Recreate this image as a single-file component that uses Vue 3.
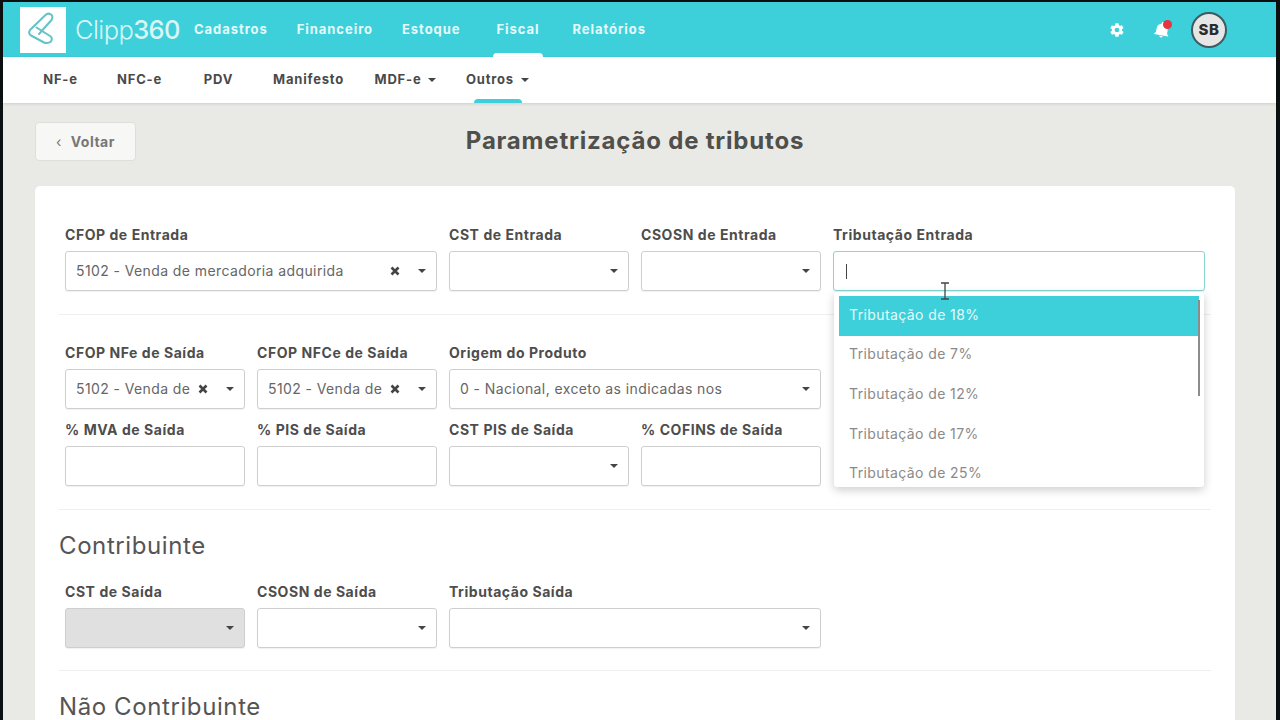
<template>
  <div class="page">
    <header class="topbar">
      <div class="logo-box">
        <svg viewBox="0 0 46 46" width="46" height="46">
          <path class="clip" d="M19 27 L31.500 13 Q33.500 9.500 31 7.500 Q28 5.500 25.500 8 L10 23 Q8 26.500 11 28.500 L24 35.500 Q28 37 31 34.500 Q33 31 30 29 L16.500 20.500" />
        </svg>
      </div>
      <div class="brand"><span class="brand-thin">Clipp</span><span class="brand-num">360</span></div>
      <nav class="main-nav">
        <a v-for="item in mainNav" :key="item" :class="{ active: item === 'Fiscal' }">{{ item }}</a>
      </nav>
      <div class="top-right">
        <svg class="gear" viewBox="0 0 24 24" width="16" height="16">
          <path fill="#fff" d="M19.4 13c.05-.33.08-.66.08-1s-.03-.67-.08-1l2.1-1.65a.5.5 0 0 0 .12-.64l-2-3.46a.5.5 0 0 0-.6-.22l-2.49 1a7.3 7.3 0 0 0-1.73-1l-.38-2.65A.5.5 0 0 0 13.93 2h-4a.5.5 0 0 0-.5.42l-.37 2.65a7.6 7.6 0 0 0-1.73 1l-2.49-1a.5.5 0 0 0-.6.22l-2 3.46a.5.5 0 0 0 .12.64L4.46 11c-.05.33-.08.67-.08 1s.03.67.08 1l-2.1 1.65a.5.5 0 0 0-.12.64l2 3.46c.12.22.38.3.6.22l2.49-1c.52.4 1.1.73 1.73 1l.37 2.65c.05.24.26.42.5.42h4c.25 0 .46-.18.5-.42l.38-2.65a7.3 7.3 0 0 0 1.73-1l2.49 1c.22.08.48 0 .6-.22l2-3.46a.5.5 0 0 0-.12-.64ZM12 15.5a3.5 3.5 0 1 1 0-7 3.5 3.5 0 0 1 0 7Z" />
        </svg>
        <div class="bell-wrap">
          <svg class="bell" viewBox="0 0 24 24" width="18" height="18">
            <path fill="#fff" d="M12 22a2.500 2.500 0 0 0 2.400-2h-4.800a2.500 2.500 0 0 0 2.400 2Zm7.500-6V11c0-3.500-2-6.300-5.500-7.100V3.200a2 2 0 0 0-4 0v.7C6.500 4.700 4.500 7.500 4.500 11v5L2.500 18v1h19v-1Z" />
          </svg>
          <span class="dot"></span>
        </div>
        <div class="avatar">SB</div>
      </div>
    </header>

    <div class="subnav">
      <a v-for="item in subNav" :key="item.label" :class="['sub-item', { current: item.label === 'Outros' }]" :style="{ width: item.width + 'px' }">
        {{ item.label }}<span v-if="item.caret" class="caret small"></span>
      </a>
    </div>

    <main class="content">
      <div class="title-row">
        <button class="back"><span class="chev">‹</span> Voltar</button>
        <h1>Parametrização de tributos</h1>
      </div>

      <section class="card">
        <div class="grid">
          <div v-for="f in rowOne" :key="f.label" class="field" :class="f.cls">
            <label>{{ f.label }}</label>
            <div class="select" :class="{ focused: f.focused }">
              <span v-if="f.value" class="value">{{ f.value }}</span>
              <span v-if="f.focused" class="text-caret"></span>
              <svg v-if="f.clear" class="clear" viewBox="0 0 10 10" width="10" height="10">
                <path d="M1.500 1.500l7 7M8.500 1.500l-7 7" />
              </svg>
              <span v-if="!f.focused" class="caret"></span>
            </div>
            <div v-if="f.focused" class="dropdown">
              <div class="options">
                <div v-for="(o, i) in options" :key="o" class="option" :class="{ selected: i === 0 }">{{ o }}</div>
              </div>
              <span class="scroll-thumb"></span>
            </div>
            <svg v-if="f.focused" class="ibeam" viewBox="0 0 10 18" width="10" height="18">
              <path d="M1 1h8M5 1v16M1 17h8" fill="none" stroke="#444" stroke-width="1.300" />
            </svg>
          </div>
        </div>

        <hr class="rule first" />

        <div class="grid">
          <div v-for="f in rowTwo" :key="f.label" class="field" :class="f.cls">
            <label>{{ f.label }}</label>
            <div class="select">
              <span v-if="f.value" class="value">{{ f.value }}</span>
              <svg v-if="f.clear" class="clear" viewBox="0 0 10 10" width="10" height="10">
                <path d="M1.500 1.500l7 7M8.500 1.500l-7 7" />
              </svg>
              <span class="caret"></span>
            </div>
          </div>
        </div>

        <div class="grid second">
          <div v-for="f in rowThree" :key="f.label" class="field">
            <label>{{ f.label }}</label>
            <div class="select">
              <span v-if="f.select" class="caret"></span>
            </div>
          </div>
        </div>

        <hr class="rule mid" />
        <h2>Contribuinte</h2>

        <div class="grid">
          <div v-for="f in rowFour" :key="f.label" class="field" :class="f.cls">
            <label>{{ f.label }}</label>
            <div class="select" :class="{ disabled: f.disabled }">
              <span class="caret"></span>
            </div>
          </div>
        </div>

        <hr class="rule tail" />
        <h2>Não Contribuinte</h2>
      </section>
    </main>
  </div>
</template>

<script setup>
const mainNav = ['Cadastros', 'Financeiro', 'Estoque', 'Fiscal', 'Relatórios']

const subNav = [
  { label: 'NF-e', width: 79 },
  { label: 'NFC-e', width: 79 },
  { label: 'PDV', width: 79 },
  { label: 'Manifesto', width: 101 },
  { label: 'MDF-e', width: 93, caret: true },
  { label: 'Outros', width: 91, caret: true }
]

const venda = '5102 - Venda de mercadoria adquirida'
const vendaCurta = '5102 - Venda de'

const rowOne = [
  { label: 'CFOP de Entrada', value: venda, clear: true, cls: 'span2' },
  { label: 'CST de Entrada' },
  { label: 'CSOSN de Entrada' },
  { label: 'Tributação Entrada', focused: true, cls: 'span2 anchor' }
]

const rowTwo = [
  { label: 'CFOP NFe de Saída', value: vendaCurta, clear: true },
  { label: 'CFOP NFCe de Saída', value: vendaCurta, clear: true },
  { label: 'Origem do Produto', value: '0 - Nacional, exceto as indicadas nos', cls: 'span2' }
]

const rowThree = [
  { label: '% MVA de Saída' },
  { label: '% PIS de Saída' },
  { label: 'CST PIS de Saída', select: true },
  { label: '% COFINS de Saída' }
]

const rowFour = [
  { label: 'CST de Saída', disabled: true },
  { label: 'CSOSN de Saída' },
  { label: 'Tributação Saída', cls: 'span2' }
]

const options = ['Tributação de 18%', 'Tributação de 7%', 'Tributação de 12%', 'Tributação de 17%', 'Tributação de 25%']
</script>

<style>
html, body {
  margin: 0;
  height: 100%;
  overflow: hidden;
  background: #0c0f10;
}
</style>

<style scoped>
.page {
  box-sizing: border-box;
  width: 1273px;
  height: 718px;
  margin: 2px 0 0 3px;
  overflow: hidden;
  background: #e9e9e6;
  font-family: Inter, "Liberation Sans", sans-serif;
  color: #4d4d4d;
}

.topbar {
  display: flex;
  align-items: center;
  height: 55px;
  background: #3dd0da;
  padding-left: 17px;
}
.logo-box {
  width: 46px;
  height: 46px;
  background: #fff;
}
.clip {
  fill: none;
  stroke: #62c4c4;
  stroke-width: 2;
  stroke-linecap: round;
  stroke-linejoin: round;
}
.brand {
  margin-left: 9px;
  font-size: 25.500px;
  color: #d8f6f6;
  letter-spacing: -0.6px;
  width: 118px;
}
.brand-thin { font-weight: 300; }
.brand-num { font-weight: 500; }
.main-nav {
  display: flex;
  gap: 29px;
  margin-left: 1px;
  height: 100%;
  align-items: center;
}
.main-nav a {
  position: relative;
  color: #e6fafa;
  font-size: 13px;
  font-weight: 700;
  letter-spacing: 0.95px;
  line-height: 55px;
}
.main-nav a.active {
  margin: 0 4px 0 7px;
}
.main-nav a.active::after {
  content: "";
  position: absolute;
  left: 50%;
  bottom: 0;
  width: 50px;
  height: 4px;
  margin-left: -25px;
  background: #fff;
  border-radius: 5px 5px 0 0;
}
.top-right {
  display: flex;
  align-items: center;
  margin-left: auto;
  margin-right: 49px;
}
.gear { margin-right: 28px; }
.bell-wrap {
  position: relative;
  display: flex;
  margin-right: 20px;
}
.bell { transform: rotate(10deg); }
.dot {
  position: absolute;
  top: -1px;
  right: -1px;
  width: 9px;
  height: 9px;
  border-radius: 50%;
  background: #e8343f;
}
.avatar {
  box-sizing: border-box;
  display: flex;
  align-items: center;
  justify-content: center;
  width: 36px;
  height: 36px;
  border: 2px solid #3f5a60;
  border-radius: 50%;
  background: #e6e6e6;
  color: #2b2b2b;
  font-size: 15px;
  font-weight: 800;
  letter-spacing: 0.5px;
}

.subnav {
  position: relative;
  display: flex;
  box-sizing: border-box;
  height: 46px;
  padding: 0 0 2px 18px;
  background: #fff;
  box-shadow: 0 1px 3px rgba(0, 0, 0, 0.12);
}
.sub-item {
  position: relative;
  display: flex;
  align-items: center;
  justify-content: center;
  gap: 7px;
  font-size: 13px;
  font-weight: 700;
  letter-spacing: 0.8px;
  color: #4a4a4a;
}
.sub-item.current::after {
  content: "";
  position: absolute;
  left: 50%;
  bottom: -2px;
  width: 48px;
  height: 4px;
  margin-left: -24px;
  background: #3dd0da;
  border-radius: 4px 4px 0 0;
}

.content {
  padding: 19px 41px 0 32px;
}
.title-row {
  position: relative;
  display: flex;
  justify-content: center;
  align-items: center;
  height: 39px;
  margin-bottom: 25px;
}
.title-row h1 {
  margin: 0 0 2px;
  font-size: 24px;
  font-weight: 700;
  color: #4f4f4b;
  letter-spacing: 0.8px;
}
.back {
  position: absolute;
  left: 0;
  top: 0;
  width: 101px;
  height: 39px;
  background: #f7f7f6;
  border: 1px solid #dededb;
  border-radius: 4px;
  font-family: inherit;
  font-size: 14px;
  font-weight: 700;
  letter-spacing: 0.5px;
  color: #777;
}
.chev {
  font-weight: 400;
  margin-right: 5px;
}

.card {
  background: #fff;
  border-radius: 5px;
  padding: 40px 24px;
  box-shadow: 0 1px 2px rgba(0, 0, 0, 0.04);
}
.grid {
  display: grid;
  grid-template-columns: repeat(6, 180px);
  column-gap: 12px;
  padding: 0 6px;
}
.grid.second { margin-top: 12px; }
.span2 { grid-column: span 2; }
.anchor { position: relative; }
.field label {
  display: block;
  height: 25px;
  font-size: 14px;
  line-height: 18px;
  font-weight: 700;
  letter-spacing: 0.55px;
  white-space: nowrap;
  color: #4d4d4d;
}
.select {
  box-sizing: border-box;
  display: flex;
  align-items: center;
  height: 40px;
  padding: 0 10px;
  background: #fff;
  border: 1px solid #cfcfcf;
  border-radius: 3px;
  box-shadow: 0 1px 1px rgba(0, 0, 0, 0.06);
  font-size: 14px;
  letter-spacing: 0.4px;
  color: #666;
}
.select.disabled {
  background: #e0e0e0;
}
.select.focused {
  border-color: #86d6d2;
}
.value {
  flex: 1;
  margin-bottom: 2px;
  overflow: hidden;
  white-space: nowrap;
}
.clear {
  flex: none;
  margin-right: 18px;
  fill: none;
  stroke: #444;
  stroke-width: 2.600;
}
.caret {
  display: inline-block;
  flex: none;
  margin-left: auto;
  width: 0;
  height: 0;
  border-left: 4px solid transparent;
  border-right: 4px solid transparent;
  border-top: 4px solid #444;
}
.clear + .caret { margin-left: 0; }
.caret.small {
  margin: 1px 0 0;
}
.text-caret {
  width: 1px;
  height: 15px;
  margin-left: 2px;
  background: #444;
}
.dropdown {
  position: absolute;
  z-index: 5;
  left: 1px;
  top: 66px;
  width: 370px;
  height: 195px;
  overflow: hidden;
  background: #fff;
  border-radius: 3px;
  box-shadow: 0 3px 10px rgba(0, 0, 0, 0.2);
}
.options {
  padding: 4px 5px 0;
}
.option {
  box-sizing: border-box;
  display: flex;
  align-items: center;
  height: 39.600px;
  padding: 0 0 3px 10px;
  font-size: 14px;
  letter-spacing: 0.4px;
  color: #8a8a8a;
}
.option.selected {
  background: #3dd0da;
  color: #e6fafa;
}
.scroll-thumb {
  position: absolute;
  right: 4px;
  top: 8px;
  width: 2px;
  height: 96px;
  background: #8c8c8c;
}
.ibeam {
  position: absolute;
  z-index: 6;
  left: 107px;
  top: 56px;
}

.rule {
  margin: 0;
  border: 0;
  border-top: 1px solid #efefed;
}
.rule.first {
  margin: 23px 0 29px;
}
.rule.mid {
  margin-top: 23px;
}
.rule.tail {
  margin-top: 22px;
}
h2 {
  margin: 22px 0 23px;
  font-size: 24px;
  line-height: 28px;
  font-weight: 400;
  letter-spacing: 0.6px;
  color: #555;
}
</style>
